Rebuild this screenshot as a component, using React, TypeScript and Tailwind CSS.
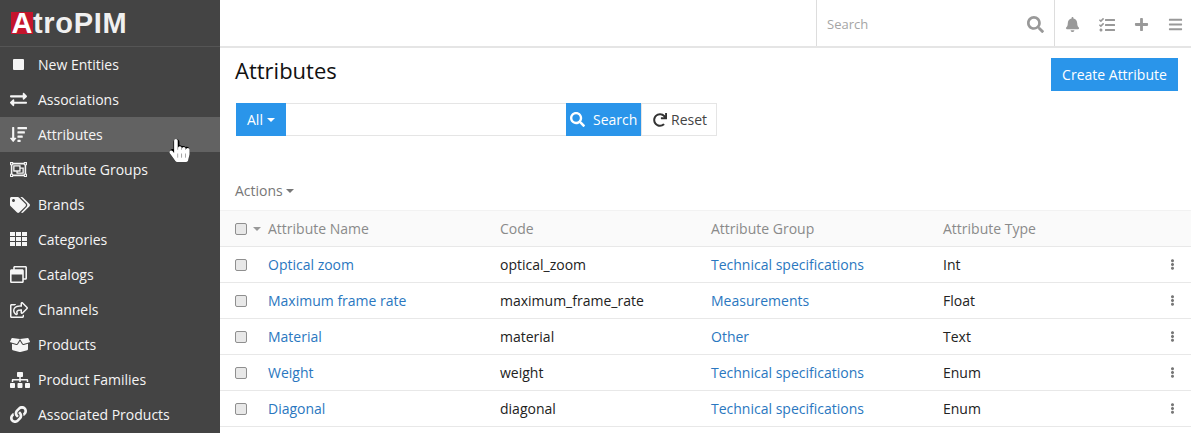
import React from 'react';
import {
  FaBars, FaBell, FaBoxOpen, FaExchangeAlt, FaEllipsisV, FaHandPointer, FaLink,
  FaPlus, FaRedo, FaRegHandPointer, FaRegObjectGroup, FaRegShareSquare, FaRegWindowRestore, FaSearch, FaSitemap, FaSortAmountDown, FaTags, FaTasks,
} from 'react-icons/fa';

const GridIcon = () => (
  <svg width="17" height="15" viewBox="0 0 17 15" fill="currentColor">
    {[0, 5, 10].map((y) =>
      [0, 6, 12].map((x) => <rect key={`${x}-${y}`} x={x} y={y} width="5" height="4" />)
    )}
  </svg>
);

const MENU = [
  { label: 'New Entities', icon: <span className="block ml-[3px] w-[11px] h-[11px] rounded-[1px] bg-[#f5f5f5]" /> },
  { label: 'Associations', icon: <FaExchangeAlt size={17} /> },
  { label: 'Attributes', icon: <FaSortAmountDown size={17} />, active: true },
  { label: 'Attribute Groups', icon: <FaRegObjectGroup size={17} /> },
  { label: 'Brands', icon: <FaTags size={20} /> },
  { label: 'Categories', icon: <GridIcon /> },
  { label: 'Catalogs', icon: <FaRegWindowRestore size={17} /> },
  { label: 'Channels', icon: <FaRegShareSquare size={18} /> },
  { label: 'Products', icon: <FaBoxOpen size={20} /> },
  { label: 'Product Families', icon: <FaSitemap size={20} /> },
  { label: 'Associated Products', icon: <FaLink size={17} /> },
];

const ROWS = [
  { name: 'Optical zoom', code: 'optical_zoom', group: 'Technical specifications', type: 'Int' },
  { name: 'Maximum frame rate', code: 'maximum_frame_rate', group: 'Measurements', type: 'Float' },
  { name: 'Material', code: 'material', group: 'Other', type: 'Text' },
  { name: 'Weight', code: 'weight', group: 'Technical specifications', type: 'Enum' },
  { name: 'Diagonal', code: 'diagonal', group: 'Technical specifications', type: 'Enum' },
];

const Caret = ({ className }: { className?: string }) => (
  <span className={`inline-block w-0 h-0 border-x-[4px] border-x-transparent border-t-[4px] border-t-current ${className ?? ''}`} />
);

const Check = () => (
  <span className="block w-3 h-3 rounded-[2px] bg-[#e8e8e8] border border-[#8f8f8f]" />
);

const Sidebar = () => (
  <aside className="relative w-[220px] shrink-0 bg-[#444444] text-[#f5f5f5]">
    <div className="flex items-center h-[47px] pl-[11px] border-b border-[#555555] font-['Liberation_Sans',sans-serif] font-bold text-[29px] leading-none text-[#f0f0f0]">
      <span className="flex items-center justify-center w-[22px] h-[22px] bg-[#c4142c] text-white">A</span>
      <span className="tracking-[0.7px]">troPIM</span>
    </div>
    <nav>
      {MENU.map((item) => (
        <div key={item.label} className={`flex items-center h-[35px] pl-[10px] ${item.active ? 'bg-[#626262]' : ''}`}>
          <span className="flex items-center w-[28px] shrink-0">{item.icon}</span>
          <span>{item.label}</span>
        </div>
      ))}
    </nav>
    <span className="absolute left-[168px] top-[139px]">
      <FaHandPointer size={23} className="absolute text-white" />
      <FaRegHandPointer size={23} className="text-black" />
    </span>
  </aside>
);

const Header = () => (
  <header className="flex justify-end h-[48px] border-b-2 border-[#e5e5e5] text-[#999999]">
    <div className="flex items-center justify-between w-[238px] pl-[10px] pr-[10px] pt-[3px] border-l border-[#dddddd]">
      <span className="text-[13px] text-[#a5a5a5]">Search</span>
      <FaSearch size={17} />
    </div>
    <div className="flex items-center gap-[19px] w-[137px] pl-[10px] pt-[3px] border-l border-[#dddddd]">
      <FaBell size={15} />
      <FaTasks size={16} />
      <FaPlus size={15} />
      <FaBars size={15} />
    </div>
  </header>
);

const SearchBar = () => (
  <div className="flex h-[33px] text-[14px]">
    <div className="flex items-center gap-1 w-[50px] pl-[11px] bg-[#2a95ea] text-white">
      All <Caret />
    </div>
    <div className="w-[280px] border-y border-[#e5e5e5]" />
    <div className="flex items-center w-[75px] pl-[4px] bg-[#2a95ea] text-white">
      <FaSearch size={15} />
      <span className="ml-[8px]">Search</span>
    </div>
    <div className="flex items-center gap-[4px] w-[76px] pl-[11px] border border-[#e5e5e5] text-[#444444]">
      <FaRedo size={14} className="text-[#333333]" />
      Reset
    </div>
  </div>
);

const Table = () => (
  <div className="mt-[10px] text-[14px]">
    <div className="flex items-center h-[37px] bg-[#fafafa] border-t border-[#f2f2f2] border-b border-b-[#e8e8e8] text-[#8a8a8a]">
      <span className="flex items-center w-[48px] pl-[15px] gap-[6px]">
        <Check />
        <Caret className="text-[#999999]" />
      </span>
      <span className="w-[232px]">Attribute Name</span>
      <span className="w-[211px]">Code</span>
      <span className="w-[232px]">Attribute Group</span>
      <span>Attribute Type</span>
    </div>
    {ROWS.map((row) => (
      <div key={row.code} className="flex items-center h-[36px] border-b border-[#e8e8e8] text-[#222222]">
        <span className="w-[48px] pl-[15px]"><Check /></span>
        <span className="w-[232px] text-[#2a77c0]">{row.name}</span>
        <span className="w-[211px]">{row.code}</span>
        <span className="w-[232px] text-[#2a77c0]">{row.group}</span>
        <span className="flex-1">{row.type}</span>
        <FaEllipsisV size={11} className="mr-[13px] text-[#777777]" />
      </div>
    ))}
  </div>
);

export default function App() {
  return (
    <div className="flex h-[433px] overflow-hidden bg-white text-[14px] font-['Open_Sans',sans-serif]">
      <Sidebar />
      <main className="flex-1 min-w-0">
        <Header />
        <div className="flex items-start justify-between pl-[15px] pr-[13px]">
          <h1 className="mt-[6px] text-[22px] leading-[33px] text-[#111111]">Attributes</h1>
          <button className="mt-[10px] h-[33px] w-[127px] bg-[#2a95ea] text-white">Create Attribute</button>
        </div>
        <div className="mt-[12px] px-[16px]"><SearchBar /></div>
        <div className="mt-[45px] pl-[15px] flex items-center gap-[3px] h-[19px] text-[#777777]">
          Actions <Caret />
        </div>
        <Table />
      </main>
    </div>
  );
}
